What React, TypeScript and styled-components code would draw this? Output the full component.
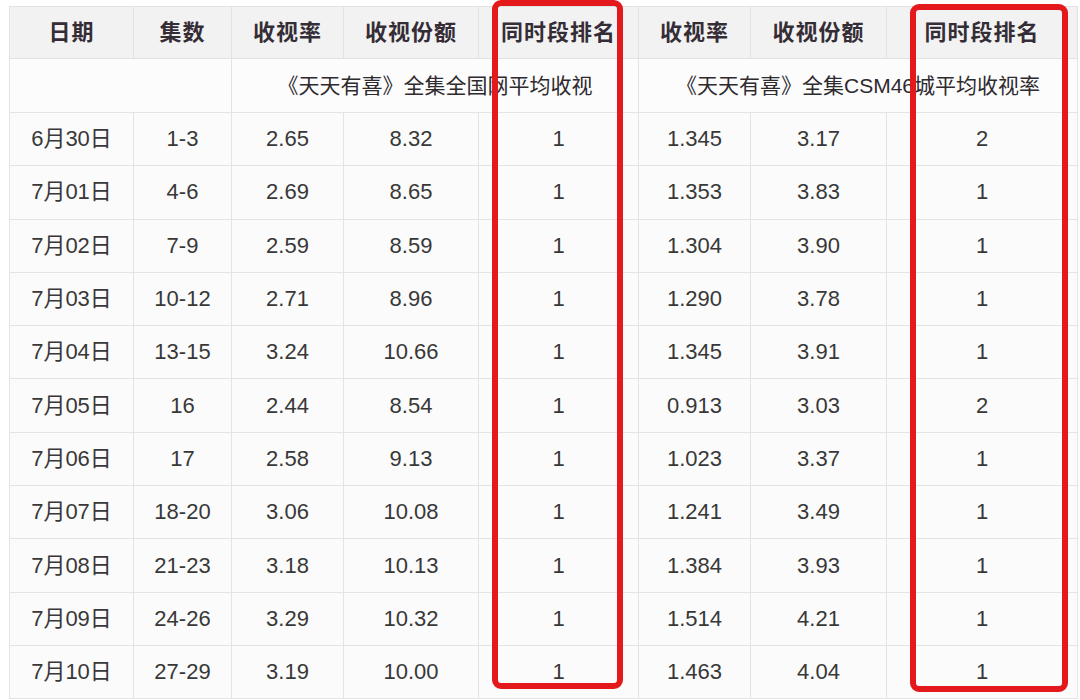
import React from 'react';
import styled, { createGlobalStyle } from 'styled-components';

const GlobalStyle = createGlobalStyle`
    html, body {
        margin: 0;
        padding: 0;
        background: #ffffff;
    }
    body {
        font-family: "Liberation Sans", "Noto Sans CJK SC", sans-serif;
        color: #333333;
    }
`;

const Page = styled.div`
    width: 1080px;
    height: 700px;
    overflow: hidden;
    padding: 6px 0 0 9px;
    box-sizing: border-box;
`;

const Frame = styled.div`
    position: relative;
    width: 1068px;
`;

const Table = styled.table`
    width: 1068px;
    border-collapse: collapse;
    table-layout: fixed;
    font-family: "Liberation Sans", "Noto Sans CJK SC", sans-serif;
`;

const HeadCell = styled.th`
    height: 51px;
    padding: 0;
    line-height: 24px;
    background: #f2f2f2;
    border: 1px solid #e2e2e2;
    font-size: 22px;
    font-weight: bold;
    color: #352d36;
    text-align: center;
    letter-spacing: 1px;
`;

const SubCell = styled.td`
    height: 53px;
    padding: 0;
    line-height: 24px;
    background: #fcfcfc;
    border: 1px solid #e4e4e4;
    font-size: 21px;
    color: #2e2a2e;
    text-align: center;
    white-space: nowrap;
    overflow: visible;
`;

const Cell = styled.td`
    height: 52.3px;
    padding: 0;
    line-height: 24px;
    background: #fbfbfb;
    border: 1px solid #e4e4e4;
    font-size: 22px;
    color: #383838;
    text-align: center;
    white-space: nowrap;
`;

const Highlight = styled.div<{ $left: number; $top: number; $width: number; $height: number }>`
    position: absolute;
    left: ${(p) => p.$left}px;
    top: ${(p) => p.$top}px;
    width: ${(p) => p.$width}px;
    height: ${(p) => p.$height}px;
    border: 6px solid #e3191c;
    border-radius: 9px;
    box-sizing: border-box;
    pointer-events: none;
`;

const widths = [124, 98, 112, 135, 160, 112, 136, 191];

const headers = ['日期', '集数', '收视率', '收视份额', '同时段排名', '收视率', '收视份额', '同时段排名'];

const rows: string[][] = [
    ['6月30日', '1-3', '2.65', '8.32', '1', '1.345', '3.17', '2'],
    ['7月01日', '4-6', '2.69', '8.65', '1', '1.353', '3.83', '1'],
    ['7月02日', '7-9', '2.59', '8.59', '1', '1.304', '3.90', '1'],
    ['7月03日', '10-12', '2.71', '8.96', '1', '1.290', '3.78', '1'],
    ['7月04日', '13-15', '3.24', '10.66', '1', '1.345', '3.91', '1'],
    ['7月05日', '16', '2.44', '8.54', '1', '0.913', '3.03', '2'],
    ['7月06日', '17', '2.58', '9.13', '1', '1.023', '3.37', '1'],
    ['7月07日', '18-20', '3.06', '10.08', '1', '1.241', '3.49', '1'],
    ['7月08日', '21-23', '3.18', '10.13', '1', '1.384', '3.93', '1'],
    ['7月09日', '24-26', '3.29', '10.32', '1', '1.514', '4.21', '1'],
    ['7月10日', '27-29', '3.19', '10.00', '1', '1.463', '4.04', '1'],
];

const App: React.FC = () => {
    return (
        <>
            <GlobalStyle />
            <Page>
                <Frame>
                    <Table>
                        <colgroup>
                            {widths.map((w, i) => (
                                <col key={i} style={{ width: w }} />
                            ))}
                        </colgroup>
                        <thead>
                            <tr>
                                {headers.map((h, i) => (
                                    <HeadCell key={i}>{h}</HeadCell>
                                ))}
                            </tr>
                        </thead>
                        <tbody>
                            <tr>
                                <SubCell colSpan={2} />
                                <SubCell colSpan={3}>《天天有喜》全集全国网平均收视</SubCell>
                                <SubCell colSpan={3}>《天天有喜》全集CSM46城平均收视率</SubCell>
                            </tr>
                            {rows.map((r, i) => (
                                <tr key={i}>
                                    {r.map((v, j) => (
                                        <Cell key={j}>{v}</Cell>
                                    ))}
                                </tr>
                            ))}
                        </tbody>
                    </Table>
                    <Highlight $left={483} $top={-6} $width={131} $height={689} />
                    <Highlight $left={901} $top={-2} $width={158} $height={688} />
                </Frame>
            </Page>
        </>
    );
};

export default App;
